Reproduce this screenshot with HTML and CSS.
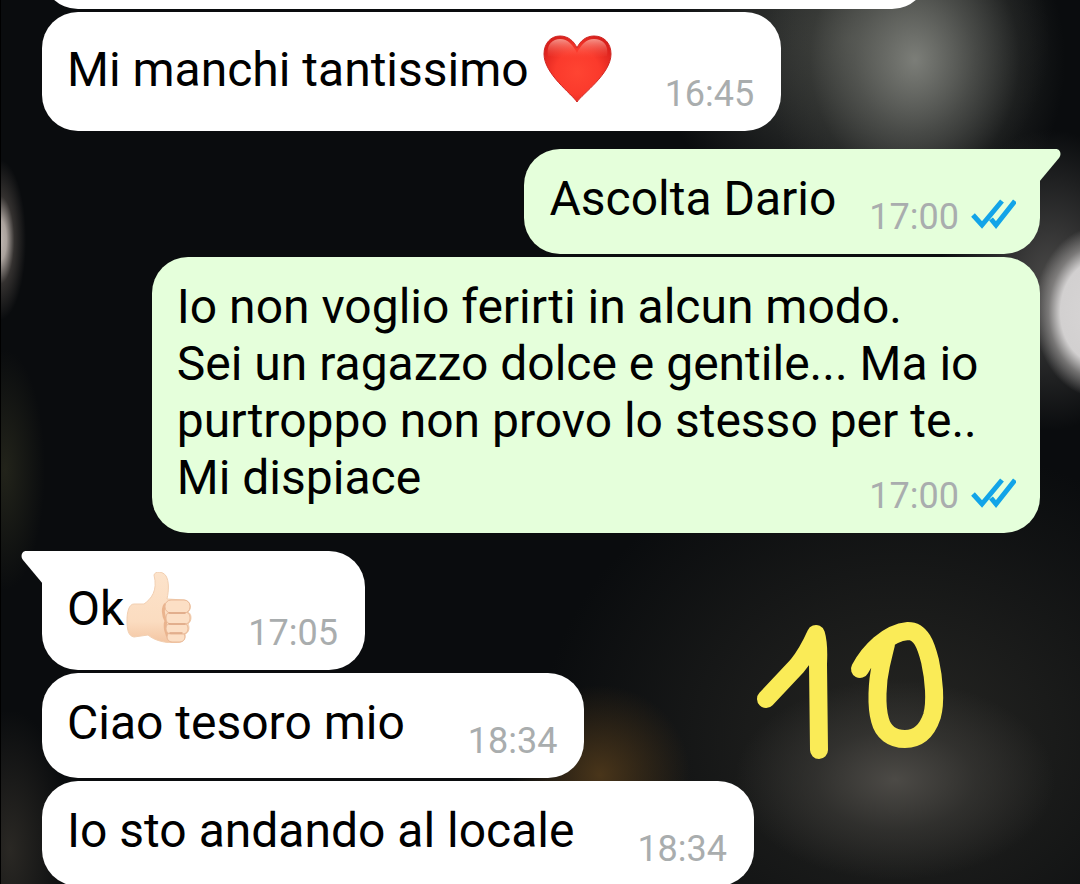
FILE: index.html
```html
<!DOCTYPE html>
<html lang="it">
<head>
    <meta charset="UTF-8">
    <meta name="viewport" content="width=device-width, initial-scale=1.0">
    <title>Chat</title>
    <link rel="stylesheet" href="styles.css">
</head>
<body>
    <!-- shared gradients and the double tick -->
    <svg class="defs" aria-hidden="true">
        <defs>
            <radialGradient id="heartFill" cx="50%" cy="55%" r="60%">
                <stop offset="0" stop-color="#ff4432"/>
                <stop offset="0.55" stop-color="#fb3a2c"/>
                <stop offset="1" stop-color="#d9201c"/>
            </radialGradient>
            <linearGradient id="heartShine" x1="0" y1="0" x2="0" y2="1">
                <stop offset="0" stop-color="#ffc4b8" stop-opacity="0.7"/>
                <stop offset="0.8" stop-color="#ff5a48" stop-opacity="0"/>
            </linearGradient>
            <linearGradient id="skin" x1="0" y1="0" x2="0" y2="1">
                <stop offset="0" stop-color="#fce3cb"/>
                <stop offset="0.7" stop-color="#fbdcc0"/>
                <stop offset="1" stop-color="#f3c5a2"/>
            </linearGradient>
            <symbol id="ticks" viewBox="0 0 45 30">
                <path d="M2 16 L11 26 L31 2 M20 20 L25 26 L44 2" fill="none" stroke="#12a4e8" stroke-width="5"/>
            </symbol>
        </defs>
    </svg>

    <main class="chat">
        <div class="bubble in previous"></div>

        <div class="bubble in emoji-msg">
            <p class="text">Mi manchi tantissimo <svg class="emoji" viewBox="0 0 71 71" role="img" aria-label="cuore rosso">
                <path d="M36 69 C31 61 3 41 3 21 C3 10 10 3 19 3 C27 3 33 8 36 15 C39 8 45 3 53 3 C63 3 70 10 70 21 C70 41 41 61 36 69 Z" fill="url(#heartFill)" stroke="#cf2522" stroke-width="1"/>
                <path d="M7 23 C5 11 12 6 19 6 C27 6 32 12 36 20 C40 12 45 6 53 6 C61 6 68 11 66 23 C58 24 46 25 36 30 C26 25 15 24 7 23 Z" fill="url(#heartShine)"/>
            </svg></p>
            <div class="meta"><time>16:45</time></div>
        </div>

        <div class="bubble out first">
            <svg class="tail" viewBox="0 0 22 34" aria-hidden="true"><path d="M0 0 H17 C21 0 23 5 20 9 L0 33 Z" fill="currentColor"/></svg>
            <p class="text">Ascolta Dario</p>
            <div class="meta"><time>17:00</time><svg class="ticks" role="img" aria-label="letto"><use href="#ticks"/></svg></div>
        </div>

        <div class="bubble out long">
            <p class="text">Io non voglio ferirti in alcun modo.<br>Sei un ragazzo dolce e gentile... Ma io purtroppo non provo lo stesso per te..<br>Mi dispiace</p>
            <div class="meta"><time>17:00</time><svg class="ticks" role="img" aria-label="letto"><use href="#ticks"/></svg></div>
        </div>

        <div class="bubble in first emoji-msg">
            <svg class="tail" viewBox="0 0 22 34" aria-hidden="true"><path d="M22 0 H5 C1 0 -1 5 2 9 L22 33 Z" fill="currentColor"/></svg>
            <p class="text">Ok<svg class="emoji" viewBox="0 0 71 71" role="img" aria-label="pollice in su">
                <path d="M30 3 C31 -1 39 -1 42 4 C45 9 45 18 43 27 L60 28 C67 29 68 37 64 40 C68 42 68 49 64 52 C66 55 65 61 61 62 C62 68 57 71 51 71 C42 71 31 69 24 63 L10 65 C4 64 3 57 3 48 C3 40 5 32 10 32 L20 32 C27 27 34 19 30 3 Z" fill="url(#skin)" stroke="#f2cfb1" stroke-width="1"/>
                <path d="M42 32 C38 35 39 44 42 49 C40 54 42 63 46 68" fill="none" stroke="#eab48e" stroke-width="3"/>
                <g fill="#fcdfc5" stroke="#e9b896" stroke-width="1">
                    <rect x="43" y="60" width="18" height="10" rx="5"/>
                    <rect x="42" y="51" width="22" height="11" rx="5"/>
                    <rect x="42" y="40" width="24" height="12" rx="5"/>
                    <rect x="41" y="28" width="25" height="13" rx="6"/>
                </g>
                <path d="M45 41 H61 M45 52 H61 M46 61 H58" fill="none" stroke="#dda583" stroke-width="1.500" stroke-linecap="round"/>
            </svg></p>
            <div class="meta"><time>17:05</time></div>
        </div>

        <div class="bubble in">
            <p class="text">Ciao tesoro mio</p>
            <div class="meta"><time>18:34</time></div>
        </div>

        <div class="bubble in">
            <p class="text">Io sto andando al locale</p>
            <div class="meta"><time>18:34</time></div>
        </div>

        <!-- marker doodle -->
        <svg class="doodle" viewBox="750 616 200 150" role="img" aria-label="10">
            <g fill="none" stroke="#faeb57" stroke-width="18" stroke-linecap="round" stroke-linejoin="round">
                <path d="M766 699 L797 666 Q807 654 816 634 Q819 644 818 664 L819 750"/>
                <path d="M860 669 C869 652 887 633 908 631 C921 631 926 645 930 661 C934 679 936 702 932 716 C927 731 918 739 905 739 C892 739 883 732 880 720 C876 706 877 682 881 665 Q884 652 886 644"/>
            </g>
        </svg>
    </main>
</body>
</html>
```
FILE: styles.css
```css
* {
    margin: 0;
    padding: 0;
    box-sizing: border-box;
}

body {
    height: 100vh;
    overflow: hidden;
    font-family: Roboto, "Noto Sans", sans-serif;
    color: #000;
    background-color: #0a0c0e;
    background-image:
        linear-gradient(to right, #000 1px, transparent 1px),
        radial-gradient(ellipse 26px 80px at 0 240px, #c0b8b3 0%, #aaa29d 25%, rgba(80, 74, 70, 0.6) 55%, transparent 100%),
        radial-gradient(ellipse 66px 86px at 1100px 312px, #d8d6d6 0%, #d2d0d0 60%, rgba(150, 148, 147, 0.7) 78%, transparent 100%),
        radial-gradient(ellipse 150px 180px at 915px 60px, rgba(132, 134, 128, 0.9) 0%, rgba(100, 102, 97, 0.6) 40%, rgba(60, 62, 58, 0.3) 70%, transparent 100%),
        radial-gradient(ellipse 200px 180px at 850px 40px, rgba(90, 92, 86, 0.7) 0%, transparent 100%),
        radial-gradient(ellipse 110px 150px at 1050px 280px, #4a4948 0%, transparent 100%),
        radial-gradient(ellipse 160px 100px at 895px 780px, #4c4a46 0%, rgba(60, 59, 56, 0.6) 50%, transparent 100%),
        radial-gradient(ellipse 90px 90px at 600px 775px, #49351a 0%, transparent 100%),
        radial-gradient(ellipse 60px 140px at 10px 850px, #2a2824 0%, transparent 100%),
        radial-gradient(ellipse 40px 120px at 5px 470px, #22231a 0%, transparent 100%),
        radial-gradient(ellipse 360px 300px at 900px 740px, #262623 0%, transparent 100%);
}

.defs {
    position: absolute;
    width: 0;
    height: 0;
}

.chat {
    position: relative;
    display: flex;
    flex-direction: column;
    gap: 3px;
    padding: 0 40px 0 42px;
}

.bubble {
    position: relative;
    display: grid;
    grid-template-columns: auto auto;
    max-width: 89%;
    padding: 21px 24px 27px 25px;
    border-radius: 36px;
}

.in {
    align-self: flex-start;
    padding-right: 27px;
    background-color: #fff;
}

.out {
    align-self: flex-end;
    background-color: #e5ffdb;
}

/* message scrolled almost out of view */
.previous {
    width: 886px;
    height: 105px;
    margin-top: -96px;
}

.first {
    margin-top: 15px;
}

.in.first {
    border-top-left-radius: 0;
}

.out.first {
    border-top-right-radius: 0;
}

.tail {
    position: absolute;
    top: 0;
    width: 22px;
    height: 34px;
}

.in .tail {
    left: -21px;
    color: #fff;
}

.out .tail {
    right: -21px;
    color: #e5ffdb;
}

.text {
    font-size: 48px;
    line-height: 57px;
}

.emoji {
    width: 71px;
    height: 71px;
    vertical-align: -18px;
}

.meta {
    display: flex;
    align-items: center;
    align-self: end;
    gap: 12px;
    height: 42px;
    margin-bottom: -11px;
    margin-left: 33px;
    font-size: 36px;
    line-height: 42px;
    color: #a9adae;
}

.in .meta {
    margin-left: 63px;
}

.in.emoji-msg .meta {
    margin-left: 53px;
}

/* the time shares the last line of the text */
.long .text,
.long .meta {
    grid-area: 1 / 1 / 2 / 3;
}

.long .meta {
    justify-self: end;
}

.ticks {
    width: 45px;
    height: 30px;
    margin-bottom: 6px;
}

.doodle {
    position: absolute;
    top: 616px;
    right: 130px;
    width: 200px;
    height: 150px;
}
```
